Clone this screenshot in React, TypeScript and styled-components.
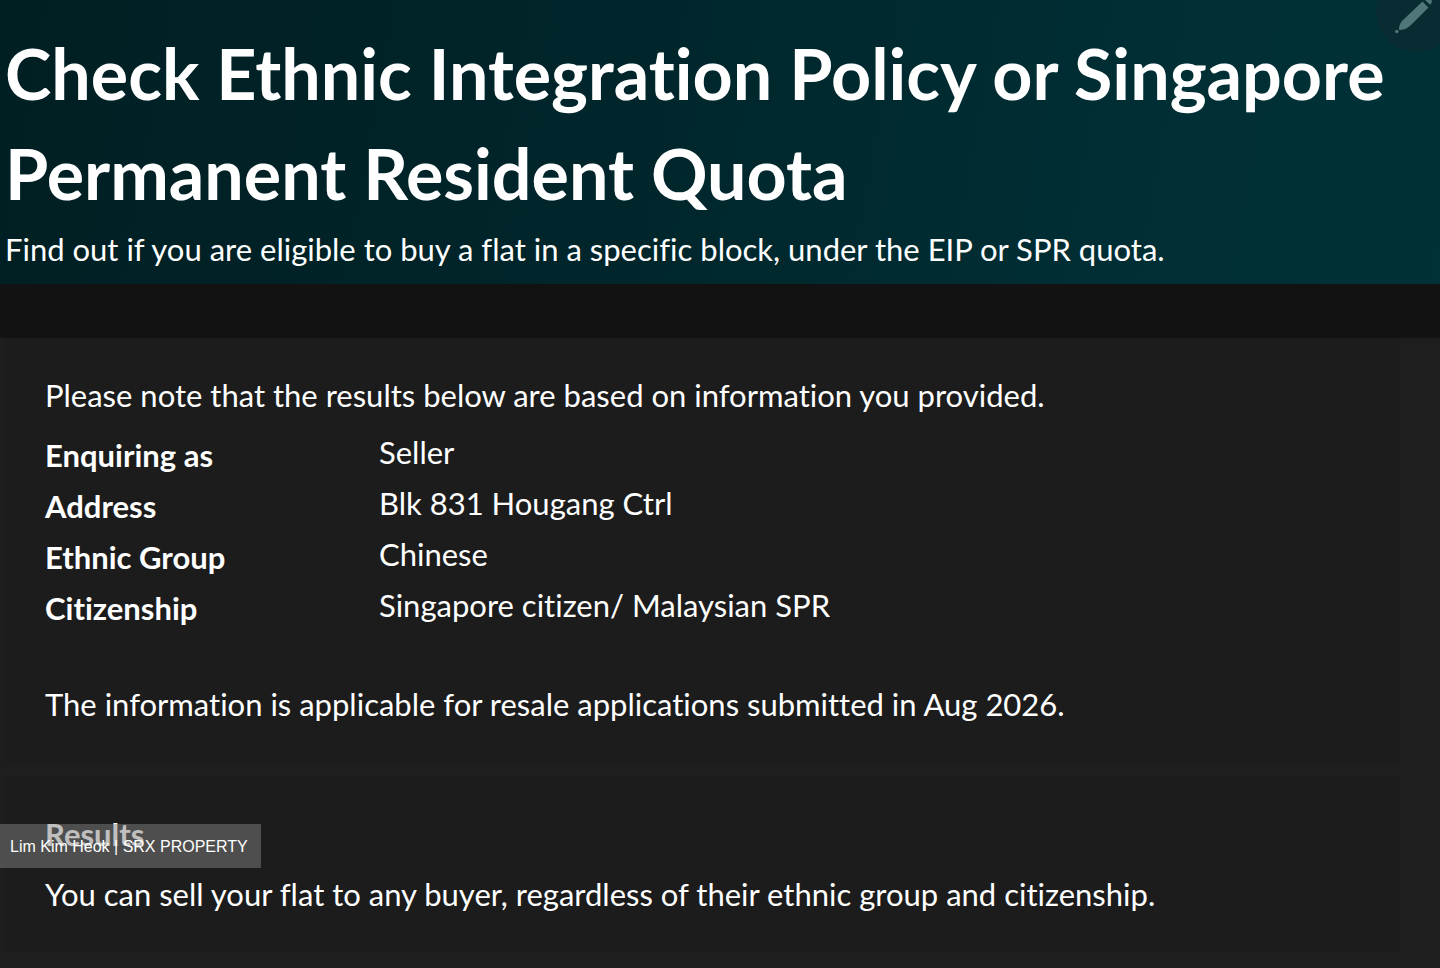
import React from "react";
import styled, { createGlobalStyle } from "styled-components";

const GlobalStyle = createGlobalStyle`
  * { box-sizing: border-box; }
  body {
    margin: 0;
    background: #121212;
    color: #ffffff;
    font-family: Lato, "Open Sans", sans-serif;
    font-size: 31px;
    line-height: 40px;
    font-variant-ligatures: none;
  }
  h1, h2, p, dl, dt, dd { margin: 0; }
`;

const Page = styled.div`
  position: relative;
  min-height: 100vh;
  display: flex;
  flex-direction: column;
  overflow: hidden;
`;

const Hero = styled.header`
  padding: 23px 5px 15px;
  margin-bottom: 54px;
  background: linear-gradient(100deg, #001f23 0%, #00252a 40%, #003036 85%, #003137 100%);
`;

const Title = styled.h1`
  font-size: 70px;
  line-height: 100px;
  font-weight: 700;
`;

const Subtitle = styled.p`
  padding-top: 6px;
`;

const Content = styled.main`
  flex: 1;
  display: flex;
  flex-direction: column;
  gap: 15px;
  padding: 0 40px 15px 5px;
  background: #1e1e1e;
`;

const Panel = styled.section`
  padding: 37px 0 38px 40px;
  background: #1c1c1c;
`;

const Details = styled.dl`
  display: grid;
  grid-template-columns: 334px 1fr;
  row-gap: 8px;
  padding: 17px 0 56px;
`;

const Term = styled.dt`
  padding-top: 3px;
  font-weight: 700;
`;

const PanelTitle = styled.h2`
  margin-bottom: 20px;
  font-size: 31px;
  font-weight: 700;
`;

const Watermark = styled.div`
  position: absolute;
  left: 0;
  bottom: 100px;
  padding: 1px 13px 0 10px;
  background: rgba(128, 128, 128, 0.5);
  font: 16px/43px "Liberation Sans", sans-serif;
`;

const EditButton = styled.button`
  position: absolute;
  top: -28px;
  right: -16px;
  display: flex;
  align-items: flex-start;
  width: 80px;
  height: 80px;
  padding: 28px 16px 0;
  border: 0;
  border-radius: 50%;
  background: #082c31;
  color: #4f7679;
`;

const rows = [
  ["Enquiring as", "Seller"],
  ["Address", "Blk 831 Hougang Ctrl"],
  ["Ethnic Group", "Chinese"],
  ["Citizenship", "Singapore citizen/ Malaysian SPR"],
];

const PencilIcon = () => (
  <svg width="48" height="36" viewBox="0 0 48 36" fill="currentColor" aria-hidden="true">
    <path d="M30.500 1.500 36.500 7.500 18.500 25.500C15.500 28.300 12 29.700 8.500 30c-1.200.1-1.800-.6-1.600-1.800C7.400 24.800 9 21.700 12 19Z" />
    <path d="M32.500 0h7c.7 1.200.6 2.400-.3 3.500L38 4.800 32.500-.5Z" />
    <circle cx="4.800" cy="31.500" r="1.700" />
  </svg>
);

export default function App() {
  return (
    <Page>
      <GlobalStyle />
      <Hero>
        <Title>Check Ethnic Integration Policy or Singapore Permanent Resident Quota</Title>
        <Subtitle>Find out if you are eligible to buy a flat in a specific block, under the EIP or SPR quota.</Subtitle>
      </Hero>
      <Content>
        <Panel>
          <p>Please note that the results below are based on information you provided.</p>
          <Details>
            {rows.map(([term, value]) => (
              <React.Fragment key={term}>
                <Term>{term}</Term>
                <dd>{value}</dd>
              </React.Fragment>
            ))}
          </Details>
          <p>The information is applicable for resale applications submitted in Aug 2026.</p>
        </Panel>
        <Panel>
          <PanelTitle>Results</PanelTitle>
          <p>You can sell your flat to any buyer, regardless of their ethnic group and citizenship.</p>
        </Panel>
      </Content>
      <EditButton aria-label="Edit">
        <PencilIcon />
      </EditButton>
      <Watermark>Lim Kim Heok | SRX PROPERTY</Watermark>
    </Page>
  );
}
